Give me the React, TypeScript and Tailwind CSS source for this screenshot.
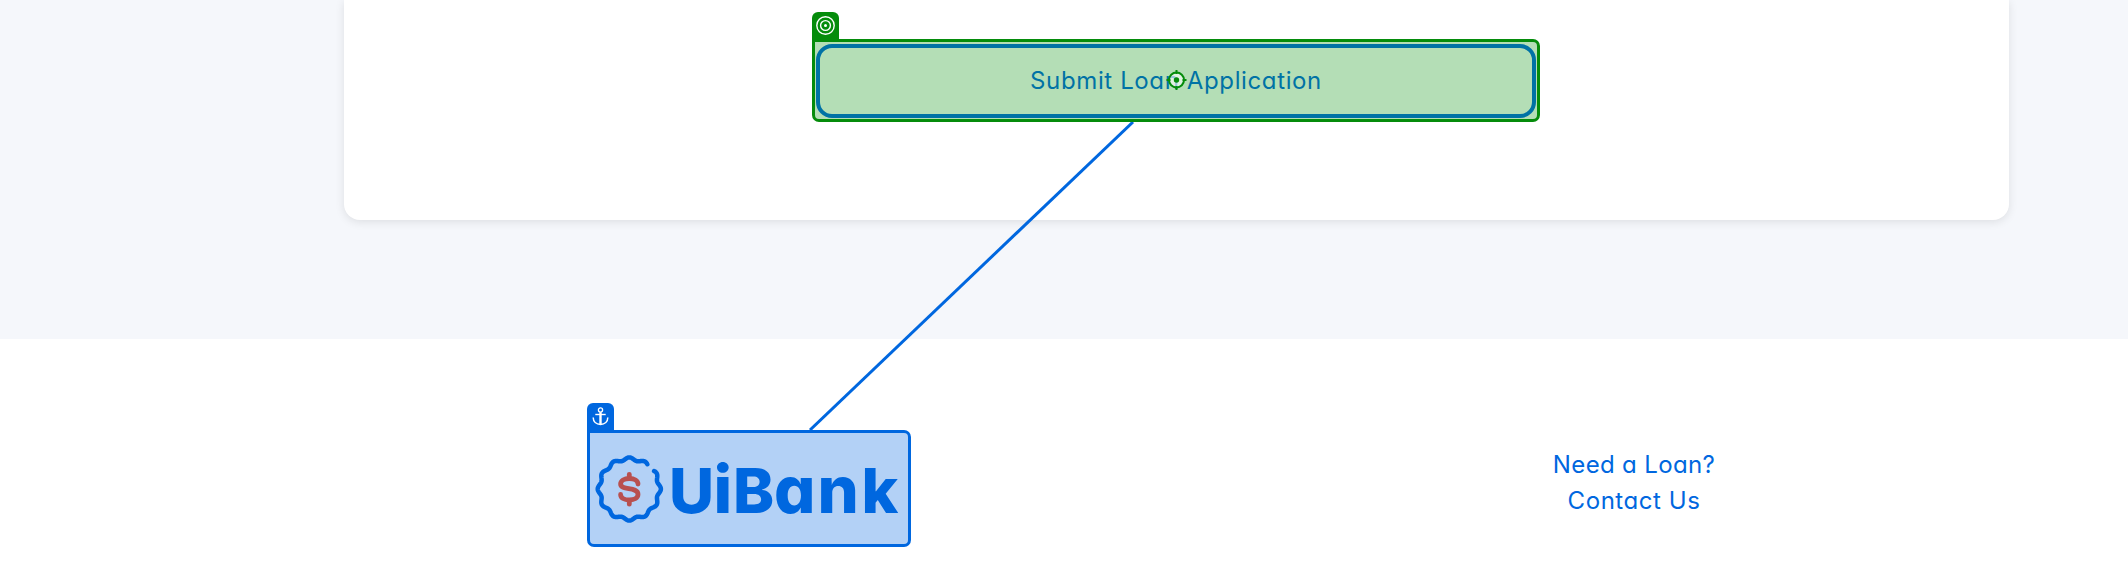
import React from "react";

const SEAL_START = 54;
const SEAL_END = 396.5;

function sealPath(): string {
  const points: string[] = [];
  for (let deg = SEAL_START; deg <= SEAL_END; deg += 1.5) {
    const t = (deg * Math.PI) / 180;
    const r = 30.2 + 1.4 * Math.cos(12 * t);
    points.push(`${(35.3 + r * Math.cos(t)).toFixed(2)} ${(35 - r * Math.sin(t)).toFixed(2)}`);
  }
  return `M${points.join("L")}`;
}

function BankLogo() {
  return (
    <div className="flex items-center">
      <svg className="h-[70px] w-[70px] shrink-0" viewBox="0 0 70 70" fill="none" strokeLinecap="round">
        <path d={sealPath()} stroke="#0067df" strokeWidth="4.5" strokeLinejoin="round" />
        <g stroke="#b8504f" strokeWidth="4.8">
          <path d="M35.3 20.3V24M35.3 46.5V50.2" />
          <path d="M44 30C44 26.5 40.3 24.5 35.3 24.5C30.3 24.5 26.6 26.5 26.6 30C26.6 37 44 32 44 40.3C44 44 40.3 46 35.3 46C30.3 46 26.6 44 26.6 40.5" />
        </g>
      </svg>
      <svg className="h-[70px] w-[236px] shrink-0 overflow-visible" viewBox="0 0 236 70">
        <text y="59" className="fill-[#0067df] font-['Inter',sans-serif] text-[62px] font-extrabold [font-feature-settings:'cv11']">
          <tspan x="5">U</tspan>
          <tspan x="49.4" className="text-[66px]">i</tspan>
          <tspan x="69">B</tspan>
          <tspan x="110" className="text-[65px]">a</tspan>
          <tspan x="153.4" className="text-[65px]">n</tspan>
          <tspan x="197.6">k</tspan>
        </text>
      </svg>
    </div>
  );
}

function TargetTag() {
  return (
    <div className="absolute -top-[30px] -left-[3px] flex h-[30px] w-[27px] justify-center rounded-t-[6px] bg-[#058c0b] pt-1">
      <svg className="h-[19px] w-[19px]" viewBox="0 0 19 19" fill="none" stroke="white">
        <circle cx="9.5" cy="9.5" r="8.7" strokeWidth="1.4" />
        <circle cx="9.5" cy="9.5" r="4.9" strokeWidth="1.4" />
        <circle cx="9.5" cy="9.5" r="1.5" fill="white" stroke="none" />
      </svg>
    </div>
  );
}

function AnchorTag() {
  return (
    <div className="absolute -top-[30px] -left-[3px] flex h-[30px] w-[27px] justify-center rounded-t-[6px] bg-[#0067df] pt-1">
      <svg className="h-[19px] w-[17px]" viewBox="0 0 17 19" fill="none" stroke="white">
        <circle cx="8.5" cy="3" r="2.1" strokeWidth="1.3" />
        <path d="M8.5 5.2V17.5" strokeWidth="2.4" />
        <path d="M3.3 7.5H13.7" strokeWidth="1.4" />
        <path d="M1.2 10.6C1.2 14.6 4.2 17.4 8.5 17.4C12.8 17.4 15.8 14.6 15.8 10.6" strokeWidth="1.5" />
      </svg>
    </div>
  );
}

function Crosshair() {
  return (
    <svg className="absolute top-[28px] left-[351px] h-[20px] w-[21px]" viewBox="0 0 21 20" fill="none">
      <circle cx="10.5" cy="10" r="7.5" fill="white" fillOpacity="0.6" stroke="#058c0b" strokeWidth="2" />
      <circle cx="10.5" cy="10" r="2.7" fill="#058c0b" />
      <path d="M10.5 0V4M10.5 16V20M0.5 10H4.5M16.5 10H20.5" stroke="#058c0b" strokeWidth="2" />
    </svg>
  );
}

export default function App() {
  return (
    <div className="relative h-[566px] w-[2128px] overflow-hidden bg-white font-['Inter',sans-serif] [font-feature-settings:'cv11']">
      <main className="h-[339px] bg-[#f5f7fb] pl-[344px]">
        <section className="h-[220px] w-[1665px] rounded-b-[16px] bg-white pt-[39px] pl-[468px] shadow-[0_2px_10px_rgba(0,0,0,0.10)]">
          <div className="relative h-[83px] w-[728px] rounded-[7px] rounded-tl-none border-3 border-[#058c0b] bg-[#b4deb6] px-px pt-[2px] pb-px">
            <TargetTag />
            <button className="flex h-[74px] w-full items-center justify-center rounded-[16px] border-4 border-[#0072a5]">
              <span className="text-[24px] leading-9 tracking-[0.62px] whitespace-nowrap text-[#0072a5]">
                Submit Loan Application
              </span>
            </button>
            <Crosshair />
          </div>
        </section>
      </main>

      <footer className="flex items-start pt-[91px] pl-[587px]">
        <div className="relative h-[117px] w-[324px] shrink-0 rounded-[7px] rounded-tl-none border-3 border-[#0067df] bg-[#b3d1f6] pt-[21px] pl-[4px]">
          <AnchorTag />
          <BankLogo />
        </div>
        <nav className="mt-[17px] ml-[572px] flex w-[302px] flex-col items-center text-[24px] leading-9 text-[#0067df]">
          <a className="tracking-[0.35px] whitespace-nowrap">Need a Loan?</a>
          <a className="tracking-[0.55px] whitespace-nowrap">Contact Us</a>
        </nav>
      </footer>

      <svg className="pointer-events-none absolute top-[122px] left-[808px] h-[308px] w-[330px]" viewBox="0 0 330 308">
        <path d="M325 0L2 308" stroke="#0067df" strokeWidth="3" />
      </svg>
    </div>
  );
}
